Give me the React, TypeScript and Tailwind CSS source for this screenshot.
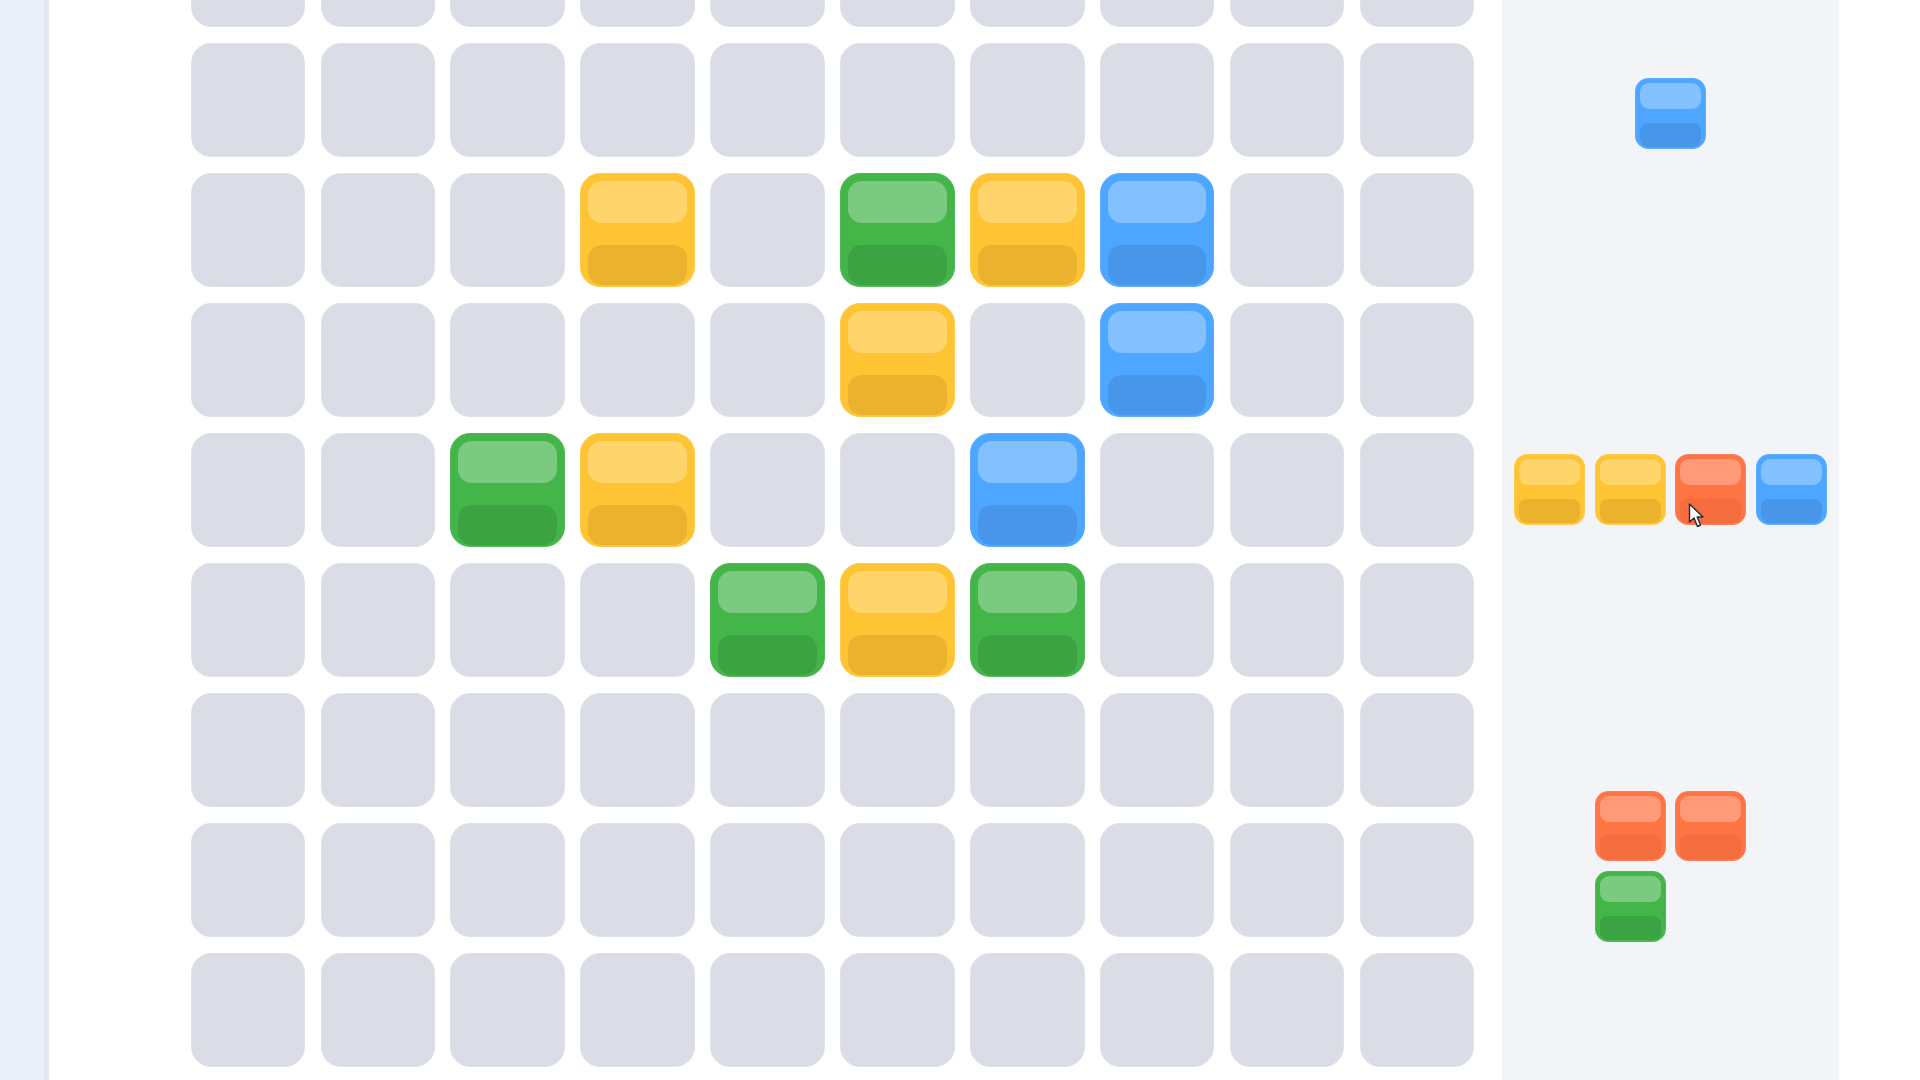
type Color = "yellow" | "green" | "blue" | "orange";

const blockStyles: Record<Color, { body: string; top: string; bottom: string }> = {
  yellow: { body: "bg-[#ffc433] border-[#ffcb4d]", top: "bg-[#ffd56b]", bottom: "bg-[#ebb32d]" },
  green: { body: "bg-[#43b549] border-[#50ba56]", top: "bg-[#7acb7f]", bottom: "bg-[#3ca342]" },
  blue: { body: "bg-[#4da6ff] border-[#5cadff]", top: "bg-[#82c0ff]", bottom: "bg-[#4896ea]" },
  orange: { body: "bg-[#ff7445] border-[#ff8058]", top: "bg-[#ff9a78]", bottom: "bg-[#f56c3f]" },
};

// row-column -> color, everything else on the board is an empty slot
const placed: Record<string, Color> = {
  "2-3": "yellow",
  "2-5": "green",
  "2-6": "yellow",
  "2-7": "blue",
  "3-5": "yellow",
  "3-7": "blue",
  "4-2": "green",
  "4-3": "yellow",
  "4-6": "blue",
  "5-4": "green",
  "5-5": "yellow",
  "5-6": "green",
};

const rows = Array.from({ length: 9 }, (_, i) => i);
const cols = Array.from({ length: 10 }, (_, i) => i);

function BoardBlock({ color }: { color: Color }) {
  const s = blockStyles[color];
  return (
    <div className={`flex h-[114px] w-[114.5px] flex-col justify-between rounded-[20px] border px-[7px] pb-[1px] pt-[7px] ${s.body}`}>
      <div className={`h-[42px] rounded-[14px] ${s.top}`} />
      <div className={`h-[40px] rounded-[14px] ${s.bottom}`} />
    </div>
  );
}

function PieceBlock({ color, children }: { color: Color; children?: React.ReactNode }) {
  const s = blockStyles[color];
  return (
    <div className={`relative flex h-[70.7px] w-[70.7px] flex-col justify-between rounded-[13px] border px-[4px] pb-[1px] pt-[4px] ${s.body}`}>
      <div className={`h-[26px] rounded-[9px] ${s.top}`} />
      <div className={`h-[24px] rounded-[8px] ${s.bottom}`} />
      {children}
    </div>
  );
}

function Cursor() {
  return (
    <svg className="absolute left-[12px] top-[48px]" width="18" height="26" viewBox="0 0 18 26">
      <path
        d="M1.5 1 L1.5 19 L6 15 L9.5 23.5 L12.5 22 L9.2 14 L15 14 Z"
        fill="#ffffff"
        stroke="#2b2b2b"
        strokeWidth="1.4"
        strokeLinejoin="round"
      />
    </svg>
  );
}

export default function App() {
  return (
    <div className="flex h-screen w-full overflow-hidden bg-white blur-[0.5px]">
      <div className="h-full w-[49px] shrink-0 border-r-[5px] border-[#e3e7ef] bg-[#ebeff8]" />

      <main className="w-[1453px] shrink-0 pl-[141.7px]">
        <div className="mt-[-87px] grid w-[1284px] grid-cols-[repeat(10,114.5px)] gap-x-[15.4px] gap-y-4">
          {rows.map((r) =>
            cols.map((c) => {
              const color = placed[`${r}-${c}`];
              return color ? (
                <BoardBlock key={`${r}-${c}`} color={color} />
              ) : (
                <div key={`${r}-${c}`} className="h-[114px] w-[114.5px] rounded-[20px] border border-[#dfe2ea] bg-[#dadde6]" />
              );
            })
          )}
        </div>
      </main>

      <aside className="h-full w-[337px] shrink-0 bg-[#f3f4f8]">
        <div className="mt-[-75px] flex flex-col">
          <div className="flex h-[376.5px] items-center justify-center">
            <PieceBlock color="blue" />
          </div>
          <div className="flex h-[376.5px] items-center justify-center gap-[9.9px]">
            <PieceBlock color="yellow" />
            <PieceBlock color="yellow" />
            <PieceBlock color="orange">
              <Cursor />
            </PieceBlock>
            <PieceBlock color="blue" />
          </div>
          <div className="flex h-[376.5px] items-center justify-center">
            <div className="grid grid-cols-2 gap-[9.9px]">
              <PieceBlock color="orange" />
              <PieceBlock color="orange" />
              <PieceBlock color="green" />
            </div>
          </div>
        </div>
      </aside>
    </div>
  );
}
